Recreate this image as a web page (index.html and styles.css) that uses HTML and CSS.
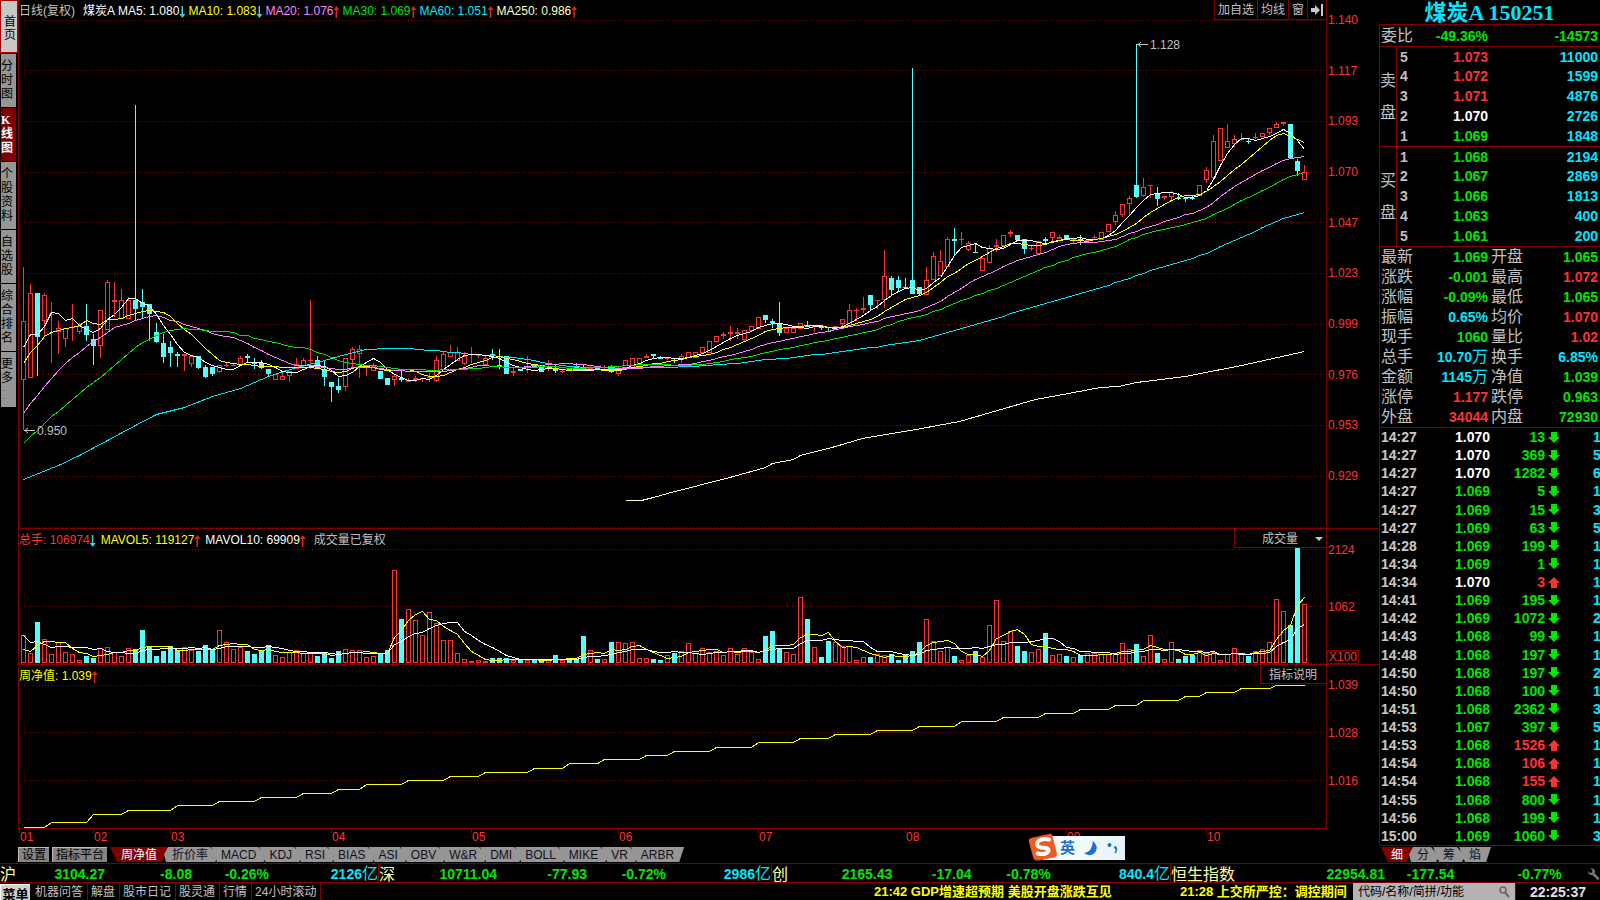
FILE: index.html
```html
<!DOCTYPE html>
<html lang="zh-CN">
<head>
<meta charset="utf-8">
<title>煤炭A 150251</title>
<link rel="stylesheet" href="styles.css">
</head>
<body>
<div class="app">
  <div class="workspace">
    <nav class="views">
      <button class="view home">首<br>页</button>
      <button class="view">分<br>时<br>图</button>
      <button class="view active">K<br>线<br>图</button>
      <button class="view">个<br>股<br>资<br>料</button>
      <button class="view">自<br>选<br>股</button>
      <button class="view">综<br>合<br>排<br>名</button>
      <button class="view">更<br>多<span class="dots">.<br>.</span></button>
    </nav>

    <main class="charts">
      <section class="panel price">
        <div class="plot">
          <svg id="price" viewBox="19 0 1307 528" preserveAspectRatio="none"></svg>
          <div class="legend">
            <span class="grey period">日线(复权)</span>
            <span class="white name">煤炭A</span>
            <span class="white ind">MA5: 1.080<i class="dn"></i></span>
            <span class="yellow ind">MA10: 1.083<i class="dn"></i></span>
            <span class="pink ind">MA20: 1.076<i class="up"></i></span>
            <span class="green ind">MA30: 1.069<i class="up"></i></span>
            <span class="sky ind">MA60: 1.051<i class="up"></i></span>
            <span class="cream ind">MA250: 0.986<i class="up"></i></span>
          </div>
          <div class="tools">
            <button>加自选</button><button>均线</button><button>窗</button>
            <button aria-label="展开"><svg width="12" height="12" viewBox="0 0 12 12"><path d="M0 4h4V1l5 5-5 5V8H0zM10 0h2v12h-2z" fill="#c8c8c8"/></svg></button>
          </div>
        </div>
        <div class="axis"><span>1.140</span><span>1.117</span><span>1.093</span><span>1.070</span><span>1.047</span><span>1.023</span><span>0.999</span><span>0.976</span><span>0.953</span><span>0.929</span></div>
      </section>

      <section class="panel volume">
        <div class="plot">
          <svg id="volume" viewBox="19 529 1307 135" preserveAspectRatio="none"></svg>
          <div class="legend">
            <span class="red ind">总手: 106974<i class="dn"></i></span>
            <span class="yellow ind">MAVOL5: 119127<i class="up"></i></span>
            <span class="white ind">MAVOL10: 69909<i class="up"></i></span>
            <span class="grey note">成交量已复权</span>
          </div>
          <div class="tools pick">
            <select aria-label="副图指标"><option>成交量</option></select>
            <svg width="8" height="4" viewBox="0 0 8 4"><path d="M0 0h8L4 4z" fill="#c8c8c8"/></svg>
          </div>
        </div>
        <div class="axis"><span>2124</span><span>1062</span><span class="unit">X100</span></div>
      </section>

      <section class="panel nav">
        <div class="plot">
          <svg id="nav" viewBox="19 665 1307 163" preserveAspectRatio="none"></svg>
          <div class="legend"><span class="yellow ind">周净值: 1.039<i class="up"></i></span></div>
          <div class="tools"><button class="help">指标说明</button></div>
        </div>
        <div class="axis"><span>1.039</span><span>1.028</span><span>1.016</span></div>
      </section>

      <div class="months"><span>01</span><span>02</span><span>03</span><span>04</span><span>05</span><span>06</span><span>07</span><span>08</span><span>09</span><span>10</span></div>

      <div class="tabs">
        <button class="box">设置</button><button class="box">指标平台</button>
        <button class="tab active">周净值</button><button class="tab">折价率</button><button class="tab">MACD</button><button class="tab">KDJ</button><button class="tab">RSI</button><button class="tab">BIAS</button><button class="tab">ASI</button><button class="tab">OBV</button><button class="tab">W&amp;R</button><button class="tab">DMI</button><button class="tab">BOLL</button><button class="tab">MIKE</button><button class="tab">VR</button><button class="tab last">ARBR</button>
      </div>
    </main>

    <aside class="quote">
      <h1>煤炭A 150251</h1>
      <table class="ratio"><tr><th>委比</th><td class="green">-49.36%</td><td class="green">-14573</td></tr></table>
      <table class="book">
        <tbody>
          <tr><th class="band" rowspan="5">卖<br>盘</th><th>5</th><td class="red">1.073</td><td>11000</td></tr>
          <tr><th>4</th><td class="red">1.072</td><td>1599</td></tr>
          <tr><th>3</th><td class="red">1.071</td><td>4876</td></tr>
          <tr><th>2</th><td class="white">1.070</td><td>2726</td></tr>
          <tr><th>1</th><td class="green">1.069</td><td>1848</td></tr>
        </tbody>
        <tbody>
          <tr><th class="band" rowspan="5">买<br>盘</th><th>1</th><td class="green">1.068</td><td>2194</td></tr>
          <tr><th>2</th><td class="green">1.067</td><td>2869</td></tr>
          <tr><th>3</th><td class="green">1.066</td><td>1813</td></tr>
          <tr><th>4</th><td class="green">1.063</td><td>400</td></tr>
          <tr><th>5</th><td class="green">1.061</td><td>200</td></tr>
        </tbody>
      </table>
      <table class="stats">
        <tr><th>最新</th><td class="green">1.069</td><th>开盘</th><td class="green">1.065</td></tr>
        <tr><th>涨跌</th><td class="green">-0.001</td><th>最高</th><td class="red">1.072</td></tr>
        <tr><th>涨幅</th><td class="green">-0.09%</td><th>最低</th><td class="green">1.065</td></tr>
        <tr><th>振幅</th><td class="sky">0.65%</td><th>均价</th><td class="red">1.070</td></tr>
        <tr><th>现手</th><td class="green">1060</td><th>量比</th><td class="red">1.02</td></tr>
        <tr><th>总手</th><td class="sky">10.70<b>万</b></td><th>换手</th><td class="sky">6.85%</td></tr>
        <tr><th>金额</th><td class="sky">1145<b>万</b></td><th>净值</th><td class="green">1.039</td></tr>
        <tr><th>涨停</th><td class="red">1.177</td><th>跌停</th><td class="green">0.963</td></tr>
        <tr><th>外盘</th><td class="red">34044</td><th>内盘</th><td class="green">72930</td></tr>
      </table>
      <div class="trades"><table><tbody id="ticks"></tbody></table></div>
      <div class="tabs"><button class="tab active">细</button><button class="tab">分</button><button class="tab">筹</button><button class="tab last">焰</button></div>
    </aside>
  </div>

  <div class="markets">
    <div class="market sh"><b>沪</b><span>3104.27</span><span>-8.08</span><span>-0.26%</span><span class="sky">2126<b>亿</b></span></div>
    <div class="market sz"><b>深</b><span>10711.04</span><span>-77.93</span><span>-0.72%</span><span class="sky">2986<b>亿</b></span></div>
    <div class="market cy"><b>创</b><span>2165.43</span><span>-17.04</span><span>-0.78%</span><span class="sky">840.4<b>亿</b></span></div>
    <div class="market hs"><b>恒生指数</b><span>22954.81</span><span>-177.54</span><span>-0.77%</span>
      <svg width="13" height="13" viewBox="0 0 13 13"><path d="M1 3 3 5 5 4.500 5.500 2.500 3.500.5Q7-.5 8 3 8 4 7.500 5L12.500 10.500 11 12.500 5.500 7Q1 7.500 1 3z" fill="#777"/></svg></div>
  </div>

  <footer class="bar">
    <button class="menu">菜单</button>
    <a href="#">机器问答</a><a href="#">解盘</a><a href="#">股市日记</a><a href="#">股灵通</a><a href="#">行情</a><a href="#">24小时滚动</a>
    <div class="news"><span>21:42 GDP增速超预期 美股开盘涨跌互见</span><span>21:28 上交所严控：调控期间</span></div>
    <label class="search"><input type="text" aria-label="搜索" placeholder="代码/名称/简拼/功能">
      <svg width="11" height="12" viewBox="0 0 11 12"><circle cx="4" cy="4" r="3" fill="none" stroke="#666" stroke-width="1.500"/><path d="M6 6.500 10 11" stroke="#666" stroke-width="2"/></svg></label>
    <time>22:25:37</time>
  </footer>

  <div class="ime">
    <svg class="logo" width="30" height="28" viewBox="0 0 30 28"><path d="M3 5 21 1Q24 0 24.500 3L29 21Q29 24 26 24.500L10 27.500Q6 28 5 24L1 9Q0 6 3 5z" fill="#f25a24"/><path d="M21 6.500Q14 5 10 8.500 7 13 13 14.500 21 14.500 20.500 18 18 22.500 9.500 20.500" fill="none" stroke="#fff" stroke-width="4" stroke-linecap="round"/></svg>
    <span>英</span>
    <svg width="14" height="15" viewBox="0 0 14 15"><path d="M9 0Q16 7 10 12.500 5 16 0 12 8 11.500 9 0z" fill="#1d6fd0"/></svg>
    <svg width="11" height="12" viewBox="0 0 11 12"><circle cx="2.500" cy="3" r="2" fill="#1d6fd0"/><path d="M8 4q4 1 1 7-2 1-1-1 1-2 0-3-2-2 0-3z" fill="#1d6fd0"/></svg>
  </div>
</div>
<script src="script.js"></script>
</body>
</html>
```

FILE: styles.css
```css
* { box-sizing: border-box; }
body {
  margin: 0;
  background: #000;
  color: #c0c0c0;
  font: 12px/16px "Liberation Sans", "Noto Sans CJK SC", sans-serif;
  overflow: hidden;
}
button, input, select { font: inherit; color: inherit; border: 0; border-radius: 0; margin: 0; padding: 0; background: none; }
table { border-collapse: separate; border-spacing: 0; width: 100%; }
th, td { padding: 0; }
.white { color: #fff; }
.grey { color: #c0c0c0; }
.yellow { color: #ff0; }
.pink { color: #ff80ff; }
.green { color: #00e600; }
.sky { color: #00e6ff; }
.cream { color: #ffffc8; }
.red { color: #ff3232; }

.app { display: grid; grid-template-rows: minmax(0, 1fr) 20px 17px; height: 100vh; position: relative; }
.workspace { display: flex; min-height: 0; }

/* left view switcher */
.views { width: 18px; display: flex; flex-direction: column; align-items: flex-start; gap: 1px; }
.view { width: 15px; margin-left: 1px; padding: 5px 0 6px; background: #969696; color: #000; line-height: 14px; text-align: left; min-height: 53px; white-space: nowrap; }
.view.home { width: 18px; height: 51px; margin: 0; padding: 4px 0 0 3px; background: #c8c8c8; border: 1px solid #a00000; line-height: 13px; }
.view.active { background: #800000; color: #fff; font-family: "Liberation Serif", "Noto Sans CJK SC", serif; font-weight: bold; }
.dots { display: block; font-size: 7px; line-height: 8px; padding-left: 2px; }

/* chart column */
.charts { flex: 1; min-width: 0; display: grid; grid-template-rows: minmax(0, 529fr) minmax(0, 136fr) minmax(0, 164fr) 17px 17px; }
.panel { display: grid; grid-template-columns: minmax(0, 1fr) 52px; min-height: 0; border-bottom: 1px solid #800000; }
.plot { position: relative; min-height: 0; border-left: 1px solid #800000; border-right: 1px solid #800000; }
.panel.nav { border-bottom: 0; }
.panel.nav .plot { border-bottom: 1px solid #800000; }
.plot > svg { display: block; width: 100%; height: 100%; }
.legend { position: absolute; left: 0; top: 3px; display: flex; white-space: nowrap; }
.ind { margin-right: 3px; }
.volume .ind { margin-right: 5px; }
.period { margin-right: 8px; }
.name { margin-right: 3px; }
.note { margin-left: 3px; }
.ind i { display: inline-block; width: 6px; height: 12px; vertical-align: -3px; background: #e02020; }
.ind .up { clip-path: polygon(50% 0, 100% 4px, 60% 4px, 60% 100%, 35% 100%, 35% 4px, 0 4px); }
.ind .dn { background: #40d0e0; clip-path: polygon(50% 100%, 100% 8px, 60% 8px, 60% 0, 35% 0, 35% 8px, 0 8px); }
.tools { position: absolute; right: 0; top: 0; display: flex; height: 20px; background: #000; border: solid #800000; border-width: 0 0 1px 1px; }
.tools button { display: flex; align-items: center; padding: 1px 3px 0; border-right: 1px solid #800000; }
.tools button:last-child { border-right: 0; }
.tools .help { padding: 1px 9px 0 8px; }
.volume .tools, .nav .tools { height: 19px; }
.pick { width: 92px; align-items: center; justify-content: flex-end; gap: 16px; padding: 1px 3px 0 0; }
.pick select { appearance: none; width: 37px; }
.axis { display: flex; flex-direction: column; justify-content: space-between; align-items: flex-start; padding: 12px 0 44px 1px; color: #ff3232; }
.volume .axis { justify-content: flex-start; padding: 13px 0 0 1px; gap: 41px; }
.volume .axis .unit { margin: -6px 0 0 -1px; border: 1px solid #800000; padding: 0 1px; line-height: 12px; }
.nav .axis { padding-bottom: 40px; }
.months { display: grid; grid-template-columns: 74fr 77fr 161fr 140fr 147fr 140fr 147fr 161fr 140fr 120fr; margin: 0 53px 0 1px; color: #ff3232; }
.months span { padding-left: 1px; background: linear-gradient(#800000, #800000) 0 0 / 1px 4px no-repeat; }

.tabs { display: flex; align-items: flex-start; padding-top: 1px; height: 17px; }
.box { height: 15px; padding: 0 3px; margin-right: 3px; background: #848484; color: #000; line-height: 15px; border: solid #bbb; border-width: 1px 0 0 1px; }
.tab { height: 15px; padding: 0 10px; margin-left: -7px; background: #969696; color: #101020; line-height: 17px; clip-path: polygon(0 0, calc(100% - 8px) 0, 100% 65%, calc(100% - 3px) 100%, 6px 100%); }
.tab.last { clip-path: polygon(0 0, 100% 0, calc(100% - 5px) 100%, 6px 100%); }
.tab.active { margin-left: 0; padding: 0 11px; background: #800000; color: #fff; clip-path: polygon(0 0, 100% 0, calc(100% - 6px) 100%, 7px 100%); }
.tab.active + .tab { margin-left: -6px; clip-path: polygon(6px 0, calc(100% - 8px) 0, 100% 65%, calc(100% - 3px) 100%, 4px 100%, 2px 50%); }

/* quote column */
.quote { width: 221px; display: flex; flex-direction: column; font-size: 14px; font-weight: bold; }
.quote > table, .trades { border-left: 1px solid #800000; border-top: 1px solid #800000; }
.quote h1 { margin: 0; height: 24px; font: bold 22px/26px "Liberation Serif", "Noto Sans CJK SC", serif; color: #00e6ff; text-align: center; }
.quote th { font-size: 16px; font-weight: normal; text-align: left; padding-left: 1px; }
.quote td { text-align: right; }
.quote b, .market b { font-size: 16px; font-weight: normal; }
.quote td:last-child { padding-right: 2px; }
.ratio { height: 22px; line-height: 20px; }
.ratio th { width: 40px; }
.ratio td { width: 68px; }
.ratio td:last-child { width: auto; }
.book tr, .stats tr { height: 20px; }
.book { table-layout: fixed; color: #00e6ff; line-height: 19px; border-top: 0 !important; }
.book th { width: 40px; color: #c0c0c0; font-size: 14px; font-weight: bold; padding-left: 3px; }
.book td { width: 51px; }
.book td:last-child { width: auto; }
.book .band { width: 17px; padding: 0; font-size: 16px; font-weight: normal; line-height: 32px; border-right: 1px solid #800000; }
.book tr:first-child > * { border-top: 1px solid #800000; }
.book tr:first-child > :not(.band) { line-height: 18px; }
.stats { table-layout: fixed; line-height: 18px; height: 180px; }
.stats th { width: 35px; }
.stats td + th { padding-left: 3px; }
.stats th:first-child { width: 34px; }
.stats td { width: 74px; }
.stats td:last-child { width: auto; }
.trades { flex: 1; min-height: 0; border-bottom: 1px solid #800000; overflow: hidden; }
.trades table { height: 100%; table-layout: fixed; line-height: 18px; }
.trades th { width: 46px; font-size: 14px; font-weight: bold; padding-left: 1px; color: #c8c8c8; }
.trades td { width: 64px; }
.trades .lots { width: 55px; }
.trades .way { width: 15px; }
.trades .count { width: auto; padding-left: 33px; padding-right: 0; text-align: left; color: #00e6ff; }
.way svg { display: block; margin-left: auto; }
.quote .tabs { font-size: 12px; font-weight: normal; padding-left: 2px; }
.quote .tab { padding: 0 10px; }
.quote .tab:not(.active) { margin-left: -6px; }

/* index strip */
.markets { display: grid; grid-template-columns: 379fr 393fr 399fr 429fr; border-top: 1px solid #800000; border-bottom: 1px solid #800000; font-size: 14px; font-weight: bold; line-height: 17px; color: #00e600; }
.market { display: grid; text-align: right; border-right: 1px solid #800000; white-space: nowrap; align-items: center; padding-top: 1px; }
.market > b { color: #ffffa0; text-align: left; }
.sh { grid-template-columns: 18fr 87fr 87fr 77fr 109fr; }
.sz { grid-template-columns: 18fr 100fr 90fr 79fr 105fr; }
.cy { grid-template-columns: 18fr 102fr 79fr 79fr 119fr; }
.hs { grid-template-columns: 68fr 145fr 69fr 107fr 38fr; border: 0; }
.market svg { justify-self: end; }

/* bottom bar */
.bar { display: flex; min-width: 0; white-space: nowrap; overflow: hidden; }
.menu { width: 30px; height: 20px; margin-top: 1px; background: #d4d0c8; color: #000; font-size: 13px; font-weight: bold; border: solid #fff; border-width: 1px 0 0 1px; line-height: 18px; }
.bar a { color: #c0c0c0; text-decoration: none; padding: 0 4px 0 3px; border-right: 1px solid #800000; line-height: 18px; }
.menu + a { margin-left: 2px; }
.news { flex: 1; min-width: 0; display: flex; justify-content: flex-end; overflow: hidden; color: #ff0; font-size: 13px; font-weight: bold; line-height: 18px; }
.news span { flex: none; width: 306px; overflow: hidden; }
.news span:last-child { width: 173px; }
.search { width: 163px; display: flex; align-items: center; gap: 4px; padding: 0 5px; background: #b4b4b4; border-right: 1px solid #800000; }
.search input { flex: 1; min-width: 0; color: #000; }
.search input::placeholder { color: #000; opacity: 1; }
.bar time { width: 84px; text-align: center; font-size: 14px; font-weight: bold; color: #e0e0e0; line-height: 18px; }

/* floating input-method bar */
.ime { position: absolute; right: 475px; bottom: 40px; width: 82px; height: 24px; display: flex; align-items: center; justify-content: flex-end; gap: 9px; padding-right: 7px; background: linear-gradient(90deg, #fff, #e4f4fa); color: #1d6fd0; font-size: 15px; font-weight: bold; }
.ime .logo { position: absolute; left: -15px; top: -3px; }
```

FILE: script.js
```js
const STEP = 7, X0 = 23;
const RED = '#ff3232', CYAN = '#54fcfc', GRID = '#900000';

// direction, high, body top, body bottom, low
const candles = `r267,321,379,430 r284,293,377,377 c293,293,336,376 r293,295,320,336 r302,314,315,363 r321,328,331,354 r328,328,338,347 r304,327,328,341 r323,326,331,334 c304,326,334,341
c334,339,345,365 r310,310,345,358 r280,282,329,329 r282,300,302,317 r289,300,318,318 r297,300,318,318 c105,300,308,320 c289,302,306,318 c304,304,313,341 c323,332,341,343
c334,343,356,363 c341,347,352,367 c352,354,356,367 r354,354,356,371 r356,356,363,367 c356,356,367,369 c365,367,376,378 c367,367,373,376 r365,365,371,373 r363,365,366,367
r364,365,366,366 r356,358,364,364 c354,356,358,363 c358,363,364,369 c360,363,367,369 c369,369,373,376 r374,374,379,379 r373,376,379,379 r371,371,375,382 r358,364,368,368
r358,360,365,367 r300,360,361,369 c356,360,368,369 c360,369,376,386 c382,382,386,402 c378,386,389,393 r358,358,386,391 r347,349,359,368 r345,349,353,378 r367,367,368,376
r363,366,370,370 c371,371,378,378 c378,378,384,384 r374,376,379,386 c369,378,380,382 r378,380,382,382 r376,378,380,382 r378,378,379,382 r373,377,378,382 r356,360,380,382
r352,354,369,369 r345,352,356,356 r347,352,360,360 r352,356,363,365 r347,354,355,363 r355,355,356,358 r356,358,364,364 c349,354,356,360 c349,365,366,369 c356,356,373,373
r368,371,373,376 c369,369,371,371 r356,366,367,373 c366,366,367,367 c366,366,371,371 r360,366,367,371 c365,369,371,373 r369,371,372,373 c369,369,371,371 c363,366,369,369
c365,367,370,370 r365,368,369,369 c367,367,369,369 r365,369,370,371 c365,367,371,373 r366,369,373,376 r360,360,365,365 r358,358,367,367 r358,358,363,363 r354,356,358,358
c354,354,356,358 c356,358,359,359 r357,358,359,360 c358,358,359,363 r354,356,359,363 r352,352,357,357 r352,352,357,357 r347,347,352,352 r341,341,352,352 r336,336,341,343
r332,334,336,339 r326,332,334,341 r328,332,334,339 r330,330,339,341 r326,326,330,330 r317,317,328,328 c315,315,319,323 c319,321,323,328 c302,323,332,336 r328,328,332,332
r328,328,332,332 r323,323,328,328 c321,326,327,327 r326,326,327,332 c326,327,328,330 c327,331,332,332 r326,326,329,329 r319,319,323,327 r304,310,325,325 r308,310,311,321
r297,308,310,313 c295,295,304,310 r300,300,301,309 r250,276,299,308 c276,278,289,295 c276,280,287,292 c278,287,288,288 c68,280,293,293 c287,287,293,295 r267,280,294,294
r252,256,279,279 r250,261,275,275 r237,239,266,266 c228,239,241,255 r232,239,240,245 r241,243,249,251 c243,252,253,253 r258,258,270,270 r245,248,262,262 r239,245,247,252
r235,235,245,245 r230,232,234,237 c235,235,239,239 c239,239,248,254 r246,248,249,251 r241,241,253,254 c237,239,241,244 r232,232,237,241 r235,237,239,239 c235,235,239,239
r239,239,240,243 c235,239,240,245 r239,240,241,241 r235,237,238,240 r232,232,239,239 r224,224,231,231 r211,215,221,225 r204,204,214,217 r196,198,203,215 c44,185,196,198
r178,187,195,197 r185,185,186,198 c187,193,198,206 r196,196,198,200 r191,192,196,202 c193,198,199,200 c198,198,199,202 c196,198,199,200 r185,185,195,195 r167,170,179,183
r135,141,177,180 r128,128,160,160 r124,141,147,147 r135,139,143,147 r133,139,140,141 c138,141,142,144 r133,137,138,139 r133,133,136,136 r128,128,132,135 r122,124,127,127
r122,122,124,126 c124,124,157,157 c159,161,170,176 r165,172,179,179`.split(/\s+/).map(s => {
  const [high, top, bottom, low] = s.slice(1).split(',').map(Number);
  return { rise: s[0] === 'r', high, top, bottom, low, close: s[0] === 'r' ? top : bottom };
});

const volumes = [27,9,40,23,8,20,10,8,2,6,4,14,15,10,6,14,13,32,16,6,11,16,12,15,12,11,17,12,32,20,13,15,11,8,12,17,7,5,10,12,9,9,6,9,4,11,13,12,12,5,6,8,12,92,43,53,42,27,50,39,22,22,9,3,1,2,1,4,4,4,2,3,2,2,2,3,7,2,4,3,26,12,3,3,20,20,19,20,4,4,3,2,7,9,11,19,9,14,10,11,7,14,8,14,10,3,26,31,13,10,8,65,43,15,5,21,20,16,16,2,5,5,8,7,8,2,7,11,20,43,21,11,15,6,2,7,11,5,37,62,21,31,16,11,10,13,29,7,8,6,5,7,9,9,8,8,9,19,13,18,6,27,9,3,20,3,6,7,12,9,10,2,8,14,9,6,11,13,20,63,51,37,114,58];

const navStarts = [0,4,10,15,22,28,34,40,45,49,55,61,66,73,78,83,89,93,99,105,111,116,122,128,134,140,146,151,156,160,166,169,174,179];
const navLevels = [827,822,814,810,805,801,797,793,789,784,780,776,772,768,763,759,755,751,747,742,738,734,730,726,721,717,713,709,705,700,696,692,688,685];

const px = i => X0 + STEP * i;
const rect = (x, y, w, h, c) => `<rect x="${x}" y="${y}" width="${w}" height="${h}" fill="${c}"/>`;
const frame = (x, y, w, h, c) => rect(x, y, w, h, c) + (h > 2 ? rect(x + 1, y + 1, w - 2, h - 2, '#000') : '');
const line = (pts, c) => `<polyline points="${pts.map(([x, y]) => `${x + .5},${y + .5}`).join(' ')}" fill="none" stroke="${c}" shape-rendering="crispEdges"/>`;
const rules = ys => ys.map(y => `<path d="M21 ${y + .5}H1325" stroke="${GRID}" stroke-dasharray="1 2" shape-rendering="crispEdges"/>`).join('');

// moving average; `lead` holds [index, value] points for the part before the window fills
function average(values, n, lead) {
  const pts = lead.map(([i, v]) => [px(i), v]);
  for (let i = n - 1; i < values.length; i++) {
    let sum = 0;
    for (let k = i - n + 1; k <= i; k++) sum += values[k];
    pts.push([px(i), Math.round(sum / n)]);
  }
  return pts;
}
const seq = a => a.map((v, i) => [i, v]);

const closes = candles.map(c => c.close);
let out = rules([20, 70, 121, 172, 222, 273, 324, 374, 425, 476, 527]);
candles.forEach((c, i) => {
  const x = px(i), color = c.rise ? RED : CYAN, h = Math.max(1, c.bottom - c.top + (c.bottom - c.top > 2 ? 1 : 0));
  out += rect(x, c.high, 1, Math.max(1, c.low - c.high), color);
  out += c.rise ? frame(x - 2, c.top, 5, h, color) : rect(x - 2, c.top, 5, h, color);
});
out += line([[625, 500], [641, 500], [653, 497], [667, 493], [733, 476], [765, 467], [772, 463], [793, 459], [800, 455], [835, 446], [862, 438], [910, 430], [959, 421], [1035, 399], [1068, 393], [1100, 387], [1118, 386], [1136, 382], [1185, 376], [1241, 365], [1304, 351]], '#ffffc0');
out += line(average(closes, 60, [[0, 479], [5, 465], [8, 455], [12, 440], [16, 425], [19, 414], [23, 407], [27, 396], [31, 388], [35, 376], [39, 367], [42, 362], [46, 354], [49, 349], [52, 348], [55, 348], [58, 350]]), '#00e6ff');
out += line(average(closes, 5, seq([347, 334, 334, 326])), '#fff');
out += line(average(closes, 10, seq([363, 352, 345, 336, 332, 330, 328, 327, 325])), '#ff0');
out += line(average(closes, 20, seq([413, 403, 395, 386, 378, 370, 363, 357, 352, 346, 341, 337, 332, 327, 325, 323, 320, 318, 316])), '#ff80ff');
out += line(average(closes, 30, seq([443, 436, 430, 423, 416, 411, 405, 399, 393, 387, 382, 377, 371, 365, 359, 353, 347, 342, 339, 335, 332, 330, 329, 328, 329, 329, 330, 331, 331])), '#00e600');
const marker = (x, y, t) => `<path d="M${x} ${y + .5}h11M${x + 4} ${y - 2}l-3 2.500 3 2.500" fill="none" stroke="#c8c8c8"/><text x="${x + 13}" y="${y + 5}" fill="#c0c0c0" font-size="12">${t}</text>`;
out += marker(1137, 44, '1.128') + marker(24, 430, '0.950');
document.getElementById('price').innerHTML = out;

out = rules([549, 606, 663]);
volumes.forEach((v, i) => {
  const x = px(i) - 2, y = 662 - v;
  out += candles[i].rise ? frame(x, y, 5, v + 1, RED) : rect(x, y, 5, v + 1, CYAN);
});
const toY = pts => pts.map(([x, v]) => [x, 662 - v]);
out += line(toY(average(volumes, 5, seq([13, 11, 17, 21]))), '#ff0');
out += line(toY(average(volumes, 10, seq([27, 20, 21, 18, 15, 16, 16, 15, 15]))), '#fff');
document.getElementById('volume').innerHTML = out;

const nav = [];
navStarts.forEach((s, k) => {
  const end = k + 1 < navStarts.length ? navStarts[k + 1] - 1 : candles.length - 1;
  nav.push([px(s), navLevels[k]], [px(end), navLevels[k]]);
});
document.getElementById('nav').innerHTML = rules([685, 732, 780]) + line(nav, '#ff0');

// time, price, lots, direction, deals
const trades = `14:27 1.070 13 d 1|14:27 1.070 369 d 5|14:27 1.070 1282 d 6|14:27 1.069 5 d 1|14:27 1.069 15 d 3|14:27 1.069 63 d 5|14:28 1.069 199 d 1|14:34 1.069 1 d 1|14:34 1.070 3 u 1|14:41 1.069 195 d 1|14:42 1.069 1072 d 2|14:43 1.068 99 d 1|14:48 1.068 197 d 1|14:50 1.068 197 d 2|14:50 1.068 100 d 1|14:51 1.068 2362 d 3|14:53 1.067 397 d 5|14:53 1.068 1526 u 1|14:54 1.068 106 u 1|14:54 1.068 155 u 1|14:55 1.068 800 d 1|14:56 1.068 199 d 1|15:00 1.069 1060 d 3`;
document.getElementById('ticks').innerHTML = trades.split('|').map(row => {
  const [time, price, lots, way, count] = row.split(' ');
  const tone = way === 'u' ? 'red' : 'green';
  const shape = way === 'u' ? 'M6 0 12 6H9V11H3V6H0z' : 'M3 0H9V5H12L6 11 0 5H3z';
  return `<tr><th>${time}</th><td class="${price === '1.070' ? 'white' : 'green'}">${price}</td><td class="lots ${tone}">${lots}</td><td class="way ${tone}"><svg width="12" height="11" viewBox="0 0 12 11"><path d="${shape}" fill="currentColor"/></svg></td><td class="count">${count}</td></tr>`;
}).join('');
```
